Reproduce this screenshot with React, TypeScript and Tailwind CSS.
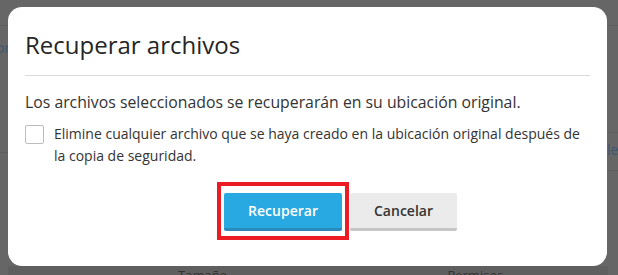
import { useState } from "react";

const font = "font-['Open_Sans',_'Liberation_Sans',_sans-serif]";

export default function App() {
  const [removeNew, setRemoveNew] = useState(false);

  return (
    <div className={`relative h-[275px] w-[618px] overflow-hidden bg-[#666666] ${font}`}>
      {/* dimmed page behind the dialog */}
      <div className="flex h-full">
        <div className="flex w-[8px] flex-col">
          <div className="h-[26px] border-b border-[#5e5e5e]" />
          <div className="h-[126px] pt-[12px] text-[14px] leading-[20px] text-[#3e5870]">
            <span className="-ml-[4px]">br</span>
          </div>
          <div className="border-t border-[#5e5e5e]" />
        </div>
        <div className="flex flex-1 flex-col justify-end">
          <div className="flex h-[9px] bg-[#5f5f5f] text-[13px] leading-[18px] text-[#333]">
            <span className="ml-[170px]">Tamaño</span>
            <span className="ml-[220px]">Permisos</span>
          </div>
        </div>
        <div className="flex w-[10px] flex-col">
          <div className="h-[26px] border-b border-[#5e5e5e]" />
          <div className="h-[106px]" />
          <div className="h-[39px] border-y border-[#5e5e5e] pt-[7px] text-[14px] leading-[20px] text-[#3e5870]">
            <span className="-ml-[1px]">le</span>
          </div>
        </div>
      </div>

      {/* dialog */}
      <div
        role="dialog"
        className="absolute left-[8px] top-[7px] flex h-[259px] w-[599px] flex-col rounded-[14px] bg-white px-[17px]"
      >
        <h1 className="pb-[15px] pt-[23px] text-[24px] leading-[30px] text-[#262626]">
          Recuperar archivos
        </h1>
        <div className="h-px bg-[#d9d9de]" />

        <p className="mt-[16px] text-[15.8px] leading-[20px] text-[#333]">
          Los archivos seleccionados se recuperarán en su ubicación original.
        </p>

        <label className="mt-[11px] flex items-start gap-[10px] text-[14px] leading-[22px] text-[#333]">
          <button
            type="button"
            onClick={() => setRemoveNew(!removeNew)}
            className="mt-[2px] h-[19px] w-[19px] shrink-0 rounded-[2px] border border-[#bdbdbd] bg-white"
            aria-pressed={removeNew}
          >
            {removeNew ? <span className="block text-[12px] leading-[17px] text-[#29a9e1]">✓</span> : null}
          </button>
          <span className="pr-[10px]">
            Elimine cualquier archivo que se haya creado en la ubicación original después de la copia de seguridad.
          </span>
        </label>

        <div className="mt-[26px] flex gap-[8px] pl-[199px]">
          <div className="relative">
            <button
              type="button"
              className="h-[38px] w-[118px] rounded-[2px] border-b-[3px] border-[#2a8bbb] bg-[#29a9e1] text-[14px] font-semibold text-white"
            >
              Recuperar
            </button>
            <span className="pointer-events-none absolute -bottom-[9px] -left-[7px] -right-[7px] -top-[11px] border-4 border-[#ed1c24]" />
          </div>
          <button
            type="button"
            className="h-[38px] w-[107px] rounded-[2px] border-b-[3px] border-[#c6c6c6] bg-[#ebebeb] text-[14px] font-semibold text-[#333]"
          >
            Cancelar
          </button>
        </div>
      </div>
    </div>
  );
}
